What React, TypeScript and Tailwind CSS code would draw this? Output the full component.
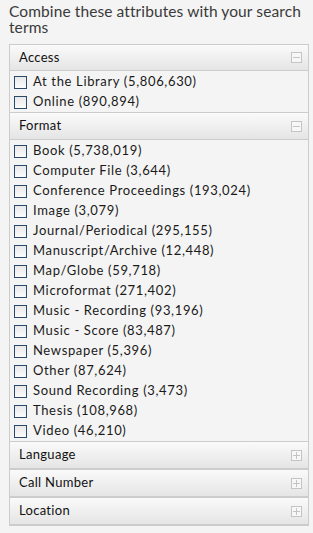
const sections = [
  {
    title: "Access",
    open: true,
    items: ["At the Library (5,806,630)", "Online (890,894)"],
  },
  {
    title: "Format",
    open: true,
    items: [
      "Book (5,738,019)",
      "Computer File (3,644)",
      "Conference Proceedings (193,024)",
      "Image (3,079)",
      "Journal/Periodical (295,155)",
      "Manuscript/Archive (12,448)",
      "Map/Globe (59,718)",
      "Microformat (271,402)",
      "Music - Recording (93,196)",
      "Music - Score (83,487)",
      "Newspaper (5,396)",
      "Other (87,624)",
      "Sound Recording (3,473)",
      "Thesis (108,968)",
      "Video (46,210)",
    ],
  },
  { title: "Language", open: false, items: [] },
  { title: "Call Number", open: false, items: [] },
  { title: "Location", open: false, items: [] },
];

const Toggle = ({ open }: { open: boolean }) => (
  <svg width="11" height="11" viewBox="0 0 11 11" className="shrink-0">
    <rect x="0.5" y="0.5" width="10" height="10" fill="#f7f7f7" stroke="#c4c4c4" />
    <line x1="2" y1="5.5" x2="9" y2="5.5" stroke="#c4c4c4" />
    {!open && <line x1="5.5" y1="2" x2="5.5" y2="9" stroke="#c4c4c4" />}
  </svg>
);

const App = () => {
  return (
    <div className="min-h-screen bg-[#f4f4f4] px-[9px] pt-[3px] font-['Lato',sans-serif]">
      <h2 className="text-[15.5px] leading-[16px] text-[#3a3a3a] tracking-[0.1px]">
        Combine these attributes with your search terms
      </h2>
      <div className="mt-[9px] w-[300px] border border-[#cccccc]">
        {sections.map((s, i) => (
          <div key={s.title}>
            <div
              className={`flex items-center justify-between border-b border-[#cccccc] bg-gradient-to-b from-[#fafafa] to-[#e5e5e5] pl-[9px] pr-[6px] text-[13px] text-[#111] tracking-[0.3px] ${
                i > 0 ? "h-[28px] border-t" : "h-[26px]"
              }`}
            >
              <span>{s.title}</span>
              <Toggle open={s.open} />
            </div>
            {s.open && (
              <ul className="bg-[#f4f4f4] pt-[1px]">
                {s.items.map((it) => (
                  <li key={it} className="flex h-[20px] items-center pl-[4px]">
                    <span className="mr-[6px] h-[13px] w-[13px] border border-[#2a4a6b] bg-gradient-to-b from-[#e8e8e8] to-[#fbfbfb]" />
                    <span className="text-[13px] tracking-[0.65px] text-[#1a1a1a]">{it}</span>
                  </li>
                ))}
              </ul>
            )}
          </div>
        ))}
      </div>
    </div>
  );
};

export default App;
